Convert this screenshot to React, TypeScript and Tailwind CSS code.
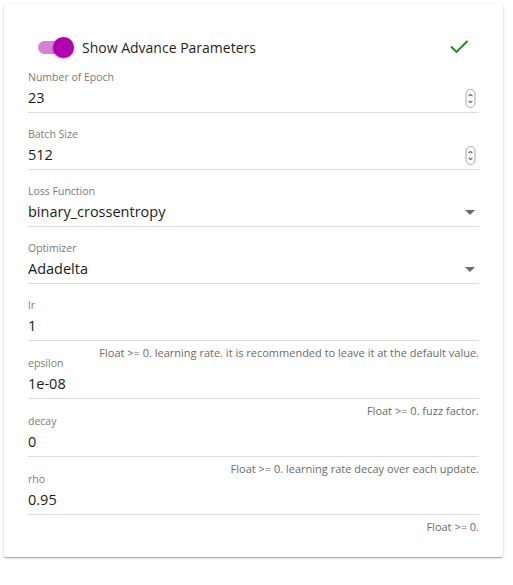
import React from "react"

type Field = {
  label: string
  value: string
  kind?: "number" | "select" | "text"
  help?: string
}

const fields: Field[] = [
  { label: "Number of Epoch", value: "23", kind: "number" },
  { label: "Batch Size", value: "512", kind: "number" },
  { label: "Loss Function", value: "binary_crossentropy", kind: "select" },
  { label: "Optimizer", value: "Adadelta", kind: "select" },
  { label: "lr", value: "1", help: "Float >= 0. learning rate. it is recommended to leave it at the default value." },
  { label: "epsilon", value: "1e-08", help: "Float >= 0. fuzz factor." },
  { label: "decay", value: "0", help: "Float >= 0. learning rate decay over each update." },
  { label: "rho", value: "0.95", help: "Float >= 0." },
]

function Spinner() {
  return (
    <svg width="11" height="19" viewBox="0 0 11 19" className="mr-[3px]">
      <rect x="1" y="0.5" width="9" height="18" rx="4.5" fill="white" stroke="#a8a8a8" strokeWidth="1" />
      <path d="M3.6 7.2 L5.5 5.4 L7.4 7.2" fill="none" stroke="#555" strokeWidth="1.1" />
      <path d="M3.6 11.8 L5.5 13.6 L7.4 11.8" fill="none" stroke="#555" strokeWidth="1.1" />
    </svg>
  )
}

function Caret() {
  return (
    <svg width="10" height="5" viewBox="0 0 10 5" className="mr-[4px]">
      <path d="M0 0 L10 0 L5 5 Z" fill="#6b6b6b" />
    </svg>
  )
}

function FieldRow({ f }: { f: Field }) {
  return (
    <div className="flex flex-col">
      <div className="text-[10.5px] leading-[14px] text-[#7a7a7a]">{f.label}</div>
      <div className="mt-[2px] flex h-[24px] items-center justify-between">
        <span className="text-[14.5px] leading-[24px] text-[#1a1a1a]">{f.value}</span>
        {f.kind === "number" && <Spinner />}
        {f.kind === "select" && <Caret />}
      </div>
      <div className="mt-[2px] h-px bg-[#dcdcdc]" />
      {f.help ? (
        <div className="h-[15px]">
          <div className="pt-[6px] text-right text-[11px] leading-[12px] text-[#6b6b6b]">{f.help}</div>
        </div>
      ) : (
        <div className="h-[14px]" />
      )}
    </div>
  )
}

export default function App() {
  return (
    <div className="min-h-[585px] bg-white p-[4px] font-['Open_Sans',sans-serif]">
      <div className="w-[499px] rounded-[2px] bg-white px-[24px] pt-[31px] pb-[27px] shadow-[0_1px_3px_rgba(0,0,0,0.2),0_1px_1px_rgba(0,0,0,0.14),0_2px_1px_-1px_rgba(0,0,0,0.12)]">
        {/* header with switch */}
        <div className="mb-[11px] flex h-[24px] items-center justify-between">
          <div className="flex items-center">
            <div className="relative ml-[10px] h-[13px] w-[32px] rounded-full bg-[#d780d7]">
              <div className="absolute top-[-4px] left-[15px] h-[21px] w-[21px] rounded-full bg-[#b000b0] shadow-[0_1px_3px_rgba(0,0,0,0.35)]" />
            </div>
            <span className="ml-[12px] text-[14px] text-[#1f1f1f]">Show Advance Parameters</span>
          </div>
          <svg width="20" height="16" viewBox="0 0 20 16" className="mr-[10px]">
            <path d="M2 7.5 L7.5 13 L18.5 2" fill="none" stroke="#178a17" strokeWidth="1.8" />
          </svg>
        </div>

        {fields.map((f) => (
          <FieldRow key={f.label} f={f} />
        ))}
      </div>
    </div>
  )
}
